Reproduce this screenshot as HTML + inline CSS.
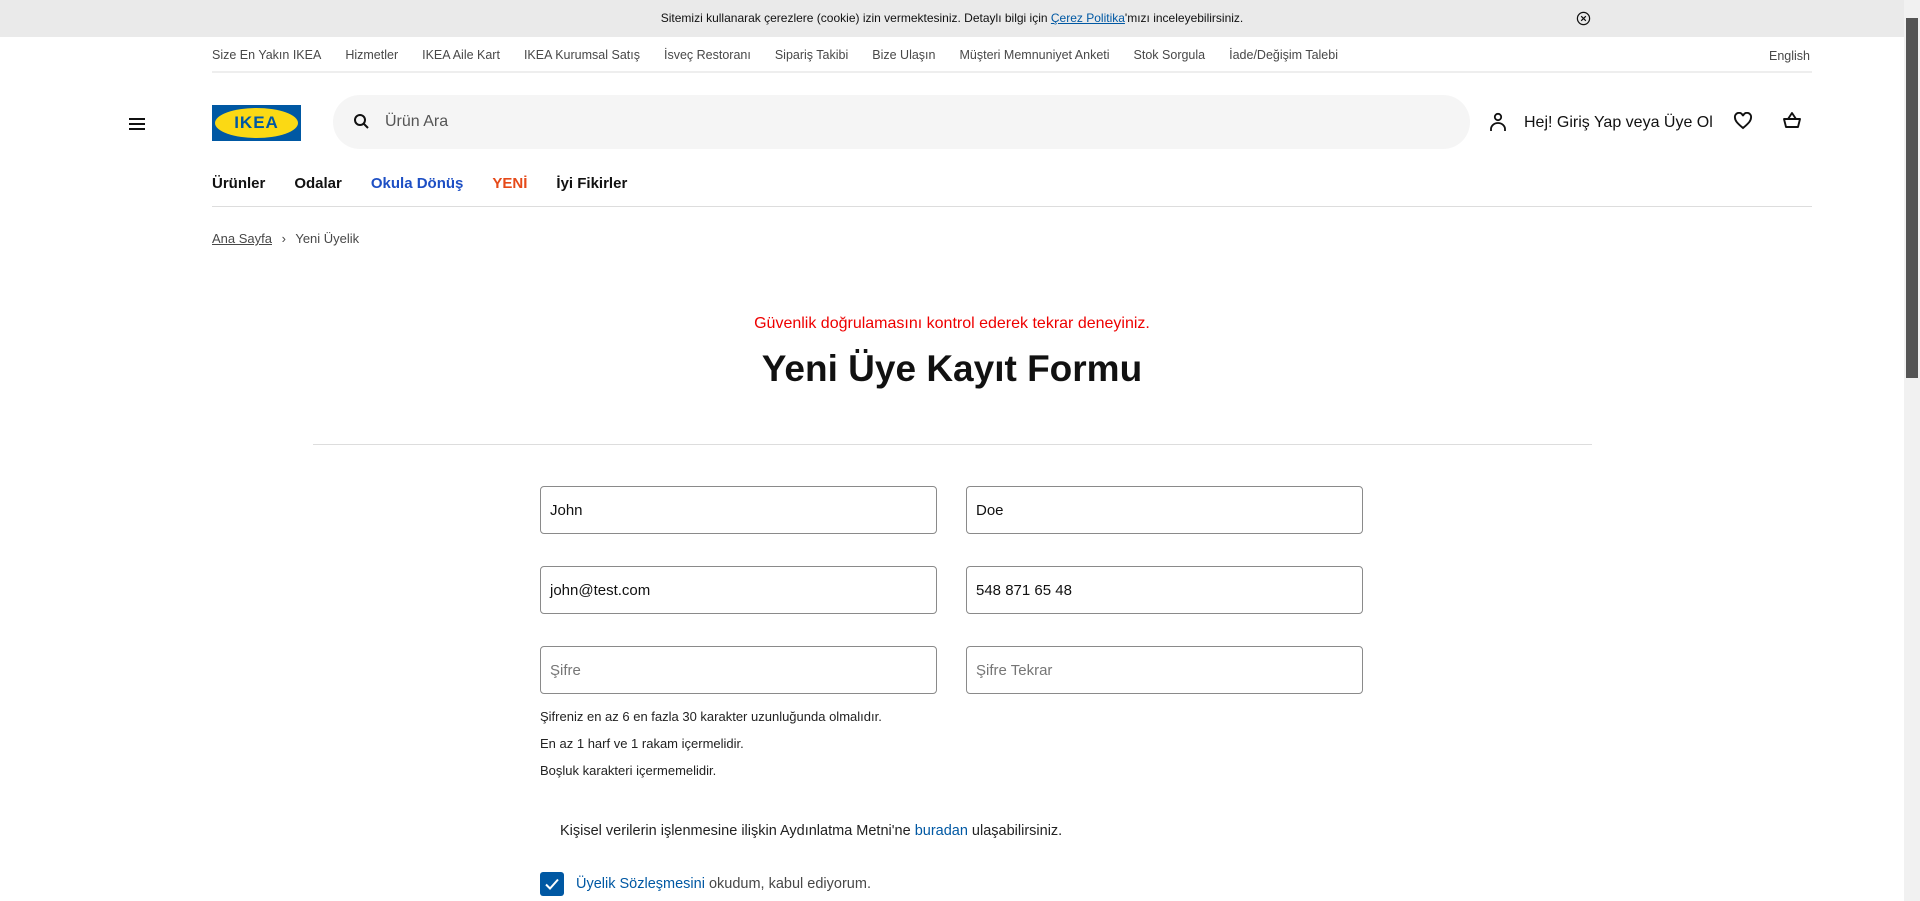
<!DOCTYPE html><html><head><meta charset="utf-8"><style>
*{box-sizing:border-box;margin:0;padding:0}
body{width:1920px;height:901px;overflow:hidden;font-family:"Liberation Sans",sans-serif;color:#111;background:#fff;position:relative}
.a{position:absolute;white-space:nowrap}
.cookie{left:0;top:0;width:1904px;height:37px;background:#eaeaea;font-size:12px;line-height:37px;text-align:center;color:#111}
.top a{color:#484848;font-size:12.5px;text-decoration:none;margin-right:24px}
.inp{position:absolute;width:397px;height:48px;border:1px solid #8a8a8a;border-radius:4px;font-size:15px;line-height:48px;padding-left:9px;color:#111}
.ph{color:#767676}
.help{font-size:13px;color:#222;left:540px}
</style></head><body>
<div class="a cookie">Sitemizi kullanarak çerezlere (cookie) izin vermektesiniz. Detaylı bilgi için <span style="color:#0058a3;text-decoration:underline">Çerez Politika</span>'mızı inceleyebilirsiniz.</div>
<svg class="a" style="left:1576px;top:11px" width="15" height="15" viewBox="0 0 16 16"><circle cx="8" cy="8" r="6.5" fill="none" stroke="#111" stroke-width="1.3"/><path d="M5.5 5.5l5 5M10.5 5.5l-5 5" stroke="#111" stroke-width="1.3"/></svg>
<div class="a top" style="left:212px;top:46px;line-height:18px"><a>Size En Yakın IKEA</a><a>Hizmetler</a><a>IKEA Aile Kart</a><a>IKEA Kurumsal Satış</a><a>İsveç Restoranı</a><a>Sipariş Takibi</a><a>Bize Ulaşın</a><a>Müşteri Memnuniyet Anketi</a><a>Stok Sorgula</a><a>İade/Değişim Talebi</a></div>
<div class="a" style="left:1769px;top:47px;font-size:12.5px;color:#484848;line-height:18px">English</div>
<div class="a" style="left:212px;top:71px;width:1600px;height:2px;background:#eee"></div>
<div class="a" style="left:129px;top:118px;width:16px;height:2px;background:#111;box-shadow:0 5px 0 #111,0 10px 0 #111"></div>
<div class="a" style="left:212px;top:105px;width:89px;height:36px;background:#0058a3"><div style="position:absolute;left:3px;top:3px;width:83px;height:30px;border-radius:50%;background:#fbd914;text-align:center;font:900 17px/30px 'Liberation Sans',sans-serif;color:#0058a3;letter-spacing:1px">IKEA</div></div>
<div class="a" style="left:333px;top:95px;width:1137px;height:54px;background:#f5f5f5;border-radius:27px"></div>
<svg class="a" style="left:353px;top:113px" width="17" height="17" viewBox="0 0 17 17"><circle cx="7" cy="7" r="5" fill="none" stroke="#111" stroke-width="2"/><path d="M10.5 10.5l4.5 4.5" stroke="#111" stroke-width="2"/></svg>
<div class="a" style="left:385px;top:113px;font-size:16px;color:#555">Ürün Ara</div>
<svg class="a" style="left:1489px;top:112px" width="18" height="20" viewBox="0 0 18 20"><circle cx="9" cy="5" r="3.2" fill="none" stroke="#111" stroke-width="1.8"/><path d="M2 19v-2a7 6 0 0 1 14 0v2" fill="none" stroke="#111" stroke-width="1.8"/></svg>
<div class="a" style="left:1524px;top:114px;font-size:16px">Hej! Giriş Yap veya Üye Ol</div>
<svg class="a" style="left:1733px;top:112px" width="20" height="18" viewBox="0 0 20 18"><path d="M10 16C4 11 2 8.5 2 5.8A4 4 0 0 1 10 4a4 4 0 0 1 8 1.8C18 8.5 16 11 10 16z" fill="none" stroke="#111" stroke-width="1.9"/></svg>
<svg class="a" style="left:1782px;top:110px" width="20" height="20" viewBox="0 0 20 20"><path d="M6 9l4-6 4 6M2 9h16l-2 8H4z" fill="none" stroke="#111" stroke-width="1.9" stroke-linejoin="round"/></svg>
<div class="a" style="left:212px;top:174px;font-size:15px;font-weight:bold;line-height:20px"><span>Ürünler</span><span style="margin-left:29px">Odalar</span><span style="margin-left:29px;color:#1d4fc4">Okula Dönüş</span><span style="margin-left:29px;color:#e64a19">YENİ</span><span style="margin-left:29px">İyi Fikirler</span></div>
<div class="a" style="left:212px;top:206px;width:1600px;height:1px;background:#ddd"></div>
<div class="a" style="left:212px;top:231px;font-size:13px;color:#484848"><span style="text-decoration:underline">Ana Sayfa</span> <span style="margin:0 6px">›</span> Yeni Üyelik</div>
<div class="a" style="left:0;width:1904px;text-align:center;top:315px;font-size:16px;color:#e00">Güvenlik doğrulamasını kontrol ederek tekrar deneyiniz.</div>
<div class="a" style="left:0;width:1904px;text-align:center;top:348px;font-size:37px;font-weight:bold;color:#111">Yeni Üye Kayıt Formu</div>
<div class="a" style="left:313px;top:444px;width:1279px;height:1px;background:#ddd"></div>
<div class="inp" style="left:540px;top:486px">John</div>
<div class="inp" style="left:966px;top:486px">Doe</div>
<div class="inp" style="left:540px;top:566px">john@test.com</div>
<div class="inp" style="left:966px;top:566px">548 871 65 48</div>
<div class="inp ph" style="left:540px;top:646px">Şifre</div>
<div class="inp ph" style="left:966px;top:646px">Şifre Tekrar</div>
<div class="a help" style="top:709px">Şifreniz en az 6 en fazla 30 karakter uzunluğunda olmalıdır.</div>
<div class="a help" style="top:736px">En az 1 harf ve 1 rakam içermelidir.</div>
<div class="a help" style="top:763px">Boşluk karakteri içermemelidir.</div>
<div class="a" style="left:560px;top:823px;font-size:14.5px;color:#222">Kişisel verilerin işlenmesine ilişkin Aydınlatma Metni'ne <span style="color:#0058a3">buradan</span> ulaşabilirsiniz.</div>
<div class="a" style="left:540px;top:872px;width:24px;height:24px;background:#0058a3;border-radius:3px"><svg width="24" height="24" viewBox="0 0 24 24"><path d="M6 12.5l4 4 8-9" fill="none" stroke="#fff" stroke-width="2"/></svg></div>
<div class="a" style="left:576px;top:876px;font-size:14.5px;color:#0058a3">Üyelik Sözleşmesini <span style="color:#484848">okudum, kabul ediyorum.</span></div>
<div class="a" style="left:1904px;top:0;width:16px;height:901px;background:#f1f1f1"></div>
<div class="a" style="left:1906px;top:18px;width:12px;height:360px;background:#555"></div>
</body></html>
